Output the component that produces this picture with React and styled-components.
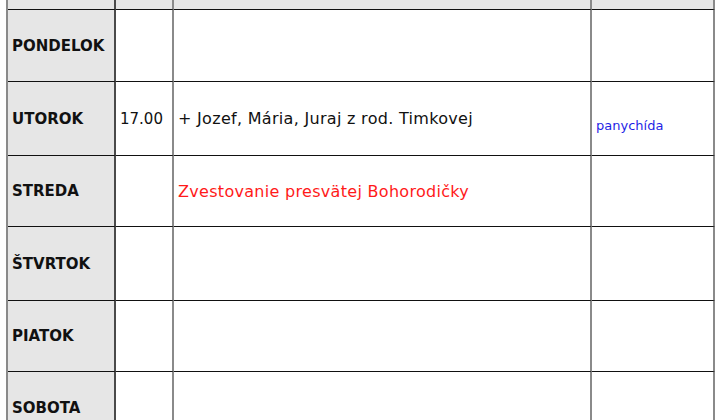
import React from "react";
import styled, { createGlobalStyle } from "styled-components";

const Global = createGlobalStyle`
  html, body { margin: 0; padding: 0; background: #ffffff; }
  body { overflow: hidden; }
  #root { width: 720px; height: 420px; overflow: hidden; }
`;

const Table = styled.div`
  display: grid;
  grid-template-columns: 108px 58px 418px 123px;
  grid-template-rows: 10px 72px 74px 71px 74px 71px 72px;
  margin-left: 6px;
  width: max-content;
  border-left: 2px solid #8a8a8a;
  font-family: "Comic Sans MS", "DejaVu Sans", sans-serif;
`;

const Cell = styled.div`
  box-sizing: border-box;
  display: flex;
  align-items: center;
  padding: 0 4px;
  border-bottom: 1px solid #111;
  border-right: 2px solid ${(p) => (p.$dark ? "#4a4a4a" : "#8a8a8a")};
  background: ${(p) => (p.$head ? "#e6e6e6" : "#ffffff")};
  overflow: hidden;
  white-space: nowrap;
`;

const Day = styled.span`
  font-weight: bold;
  font-size: 15px;
  color: #111;
`;

const Time = styled.span`
  font-size: 15px;
  color: #111;
`;

const Text = styled.span`
  font-size: 16px;
  letter-spacing: 0.3px;
  color: ${(p) => p.$color || "#111"};
`;

const Note = styled.span`
  font-size: 13px;
  color: #1f1fe6;
  margin-top: 14px;
`;

const rows = [
  { day: "PONDELOK" },
  { day: "UTOROK", time: "17.00", intent: "+ Jozef, Mária, Juraj z rod. Timkovej", note: "panychída" },
  { day: "STREDA", intent: "Zvestovanie presvätej Bohorodičky", red: true },
  { day: "ŠTVRTOK" },
  { day: "PIATOK" },
  { day: "SOBOTA" },
];

export default function App() {
  return (
    <>
      <Global />
      <Table>
        <Cell $head $dark />
        <Cell $head />
        <Cell $head />
        <Cell $head />
        {rows.map((r) => (
          <React.Fragment key={r.day}>
            <Cell $head $dark>
              <Day>{r.day}</Day>
            </Cell>
            <Cell>{r.time && <Time>{r.time}</Time>}</Cell>
            <Cell>
              {r.intent && <Text $color={r.red ? "#ff1a1a" : undefined}>{r.intent}</Text>}
            </Cell>
            <Cell>{r.note && <Note>{r.note}</Note>}</Cell>
          </React.Fragment>
        ))}
      </Table>
    </>
  );
}
